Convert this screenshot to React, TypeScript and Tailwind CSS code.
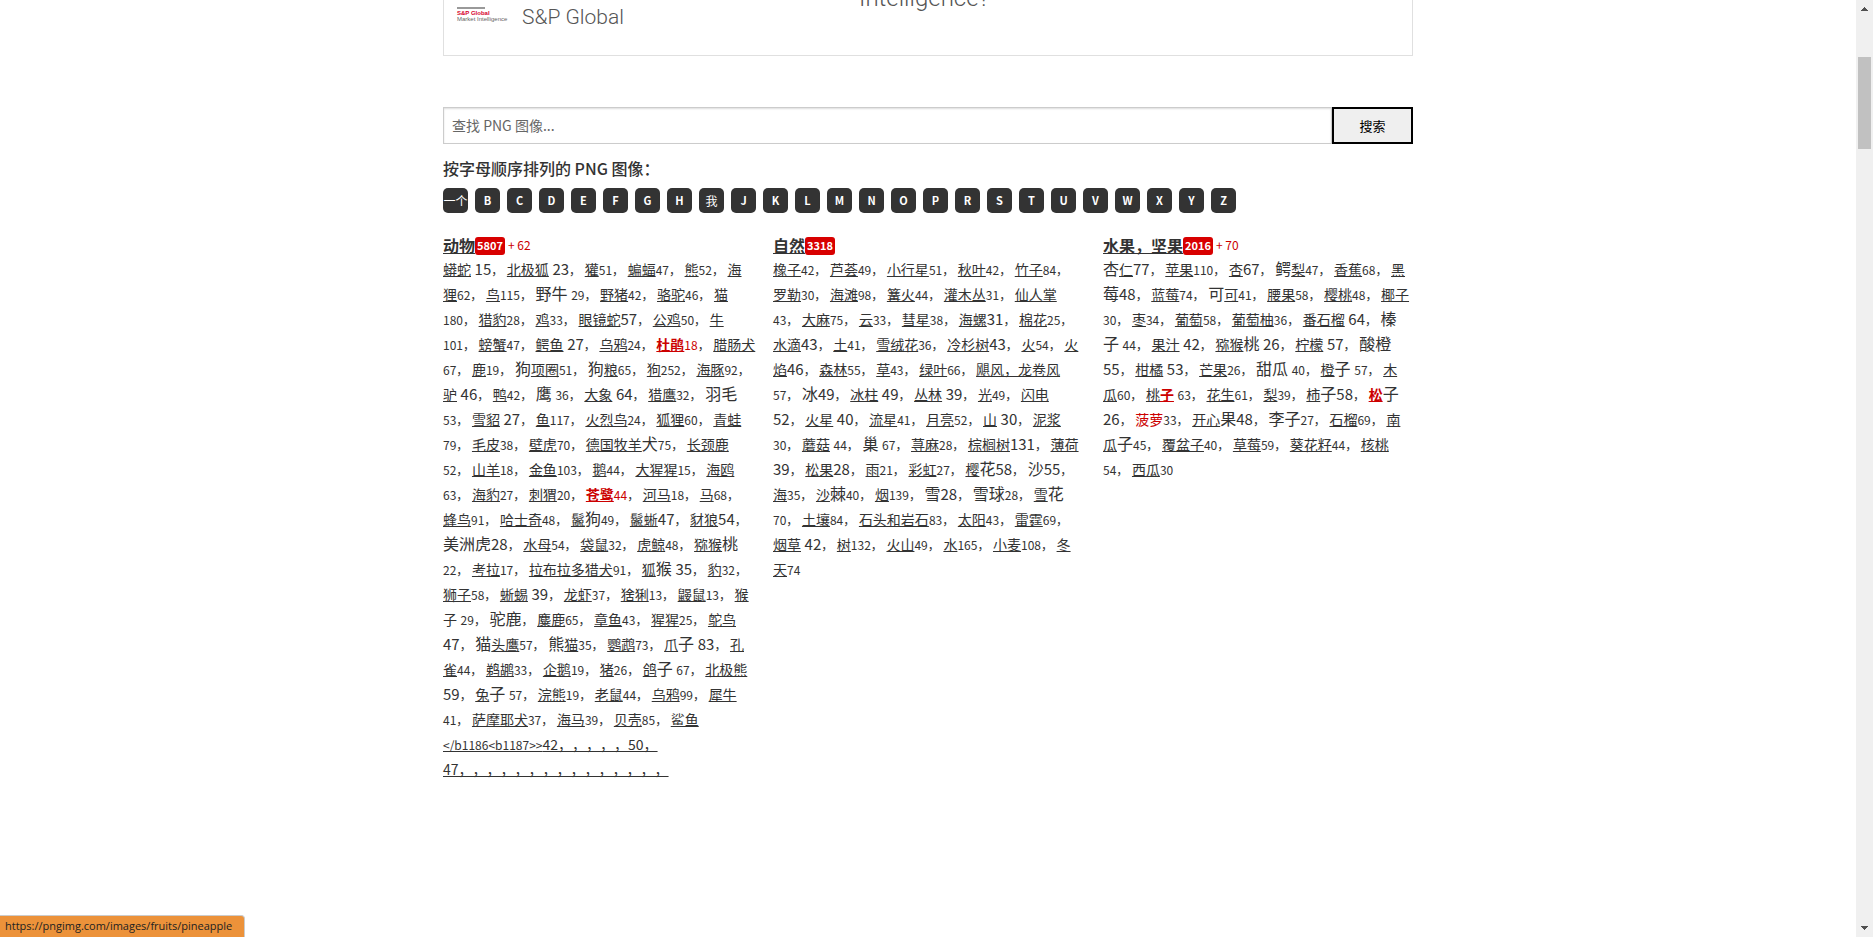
import React from "react";

/*
 * Row notation used by the category lists:
 *   [text]  link            *text*  highlighted link      %text%  hovered link
 *   ~text~  large plain     _text_  small plain
 *   #12     large count     12      small count           @12     highlighted count
 */
type Category = {
  title: string;
  total: string;
  added?: string;
  href: string;
  rows: string[];
  tail?: { tag?: string; text: string }[];
};

const categories: Category[] = [
  {
    title: "动物",
    total: "5807",
    added: "+ 62",
    href: "#animals",
    rows: [
      "[蟒蛇] #15，[北极狐] #23，[獾]51，[蝙蝠]47，[熊]52，[海]",
      "[狸]62，[鸟]115，~野牛~ 29，[野猪]42，[骆驼]46，[猫]",
      "180，[猎豹]28，[鸡]33，[眼镜蛇]#57，[公鸡]50，[牛]",
      "101，[螃蟹]47，[鳄鱼] #27，[乌鸦]24，*杜鹃*@18，[腊肠犬]",
      "67，[鹿]19，~狗~[项圈]51，~狗~[粮]65，[狗]252，[海豚]92，",
      "[驴] #46，[鸭]42，~鹰~ 36，[大象] #64，[猎鹰]32，~羽毛~",
      "53，[雪貂] #27，[鱼]117，[火烈鸟]24，[狐狸]60，[青蛙]",
      "79，[毛皮]38，[壁虎]70，[德国牧羊]~犬~75，[长颈鹿]",
      "52，[山羊]18，[金鱼]103，[鹅]44，[大猩猩]15，[海鸥]",
      "63，[海豹]27，[刺猬]20，*苍鹭*@44，[河马]18，[马]68，",
      "[蜂鸟]91，[哈士奇]48，[鬣]~狗~49，[鬣蜥]#47，[豺狼]#54，",
      "~美洲虎~#28，[水母]54，[袋鼠]32，[虎鲸]48，[猕猴]~桃~",
      "22，[考拉]17，[拉布拉多猎犬]91，[狐]~猴~ #35，[豹]32，",
      "[狮子]58，[蜥蜴] #39，[龙虾]37，[猞猁]13，[鼹鼠]13，[猴]",
      "_子_ 29，~驼鹿~，[麋鹿]65，[章鱼]43，[猩猩]25，[鸵鸟]",
      "#47，~猫~[头鹰]57，~熊~[猫]35，[鹦鹉]73，[爪]~子~ #83，[孔]",
      "[雀]44，[鹈鹕]33，[企鹅]19，[猪]26，[鸽]~子~ 67，[北极熊]",
      "#59，[兔]~子~ 57，[浣熊]19，[老鼠]44，[乌鸦]99，[犀牛]",
      "41，[萨摩耶犬]37，[海马]39，[贝壳]85，[鲨鱼]",
    ],
    tail: [
      { tag: "</b1186<b1187>>", text: "42，，，，，50，" },
      { text: "47，，，，，，，，，，，，，，，" },
    ],
  },
  {
    title: "自然",
    total: "3318",
    href: "#nature",
    rows: [
      "[橡子]42，[芦荟]49，[小行星]51，[秋叶]42，[竹子]84，",
      "[罗勒]30，[海滩]98，[篝火]44，[灌木丛]31，[仙人掌]",
      "43，[大麻]75，[云]33，[彗星]38，[海螺]#31，[棉花]25，",
      "[水滴]#43，[土]41，[雪绒花]36，[冷杉树]#43，[火]54，[火]",
      "[焰]#46，[森林]55，[草]43，[绿叶]66，[飓风，龙卷风]",
      "57，~冰~#49，[冰柱] #49，[丛林] #39，[光]49，[闪电]",
      "#52，[火星] #40，[流星]41，[月亮]52，[山] #30，[泥浆]",
      "30，[蘑菇] 44，~巢~ 67，[荨麻]28，[棕榈树]#131，[薄荷]",
      "#39，[松果]#28，[雨]21，[彩虹]27，[樱]~花~#58，~沙~#55，",
      "[海]35，[沙]~棘~40，[烟]139，~雪~#28，~雪球~28，[雪]~花~",
      "70，[土壤]84，[石头和岩石]83，[太阳]43，[雷霆]69，",
      "[烟草] #42，[树]132，[火山]49，[水]165，[小麦]108，[冬]",
      "[天]74",
    ],
  },
  {
    title: "水果，坚果",
    total: "2016",
    added: "+ 70",
    href: "#fruits",
    rows: [
      "~杏~[仁]#77，[苹果]110，[杏]#67，~鳄~[梨]47，[香蕉]68，[黑]",
      "~莓~#48，[蓝莓]74，~可~[可]41，[腰果]58，[樱桃]48，[椰子]",
      "30，[枣]34，[葡萄]58，[葡萄柚]36，[番石榴] #64，~榛~",
      "~子~ 44，[果汁] #42，[猕猴]~桃~ #26，[柠檬] #57，~酸橙~",
      "#55，[柑橘] #53，[芒果]26，~甜瓜~ 40，[橙]~子~ 57，[木]",
      "[瓜]60，[桃]*子* 63，[花生]61，[梨]39，[柿]~子~#58，*松*~子~",
      "#26，%菠萝%33，[开心]~果~#48，~李子~27，[石榴]69，[南]",
      "[瓜]~子~45，[覆盆子]40，[草莓]59，[葵花籽]44，[核桃]",
      "54，[西瓜]30",
    ],
  },
];

const letters = [
  "一个", "B", "C", "D", "E", "F", "G", "H", "我", "J", "K", "L", "M",
  "N", "O", "P", "R", "S", "T", "U", "V", "W", "X", "Y", "Z",
];

const tokenPattern = /\[[^\]]+\]|\*[^*]+\*|%[^%]+%|~[^~]+~|_[^_]+_|#\d+|@\d+|\d+|，| /g;

function Token({ token, href }: { token: string; href: string }) {
  const inner = token.slice(1, -1);
  switch (token[0]) {
    case "[":
      return <a href={href} className="text-sm leading-none underline">{inner}</a>;
    case "*":
      return <a href={href} className="text-sm leading-none font-bold text-[#c00] underline">{inner}</a>;
    case "%":
      return <a href={href} className="text-sm leading-none text-[#c00]">{inner}</a>;
    case "~":
      return <span className="leading-none">{inner}</span>;
    case "_":
      return <span className="text-sm leading-none">{inner}</span>;
    case "#":
      return <span className="text-[15px] leading-none">{token.slice(1)}</span>;
    case "@":
      return <span className="text-xs leading-none text-[#c00]">{token.slice(1)}</span>;
    case "，":
      return <><span className="text-xs leading-none">，</span> </>;
    case " ":
      return <> </>;
    default:
      return <span className="text-xs leading-none">{token}</span>;
  }
}

function CategoryColumn({ category }: { category: Category }) {
  return (
    <section className="min-w-0 flex-1">
      <h2 className="flex h-6 items-center">
        <a href={category.href} className="text-base leading-6 font-bold underline">{category.title}</a>
        <span className="mt-px flex h-[18px] items-center rounded-[3px] bg-[#d80000] px-[2px] text-[11px] font-bold text-white">
          {category.total}
        </span>
        {category.added && <span className="ml-[3px] text-xs text-[#c00]">{category.added}</span>}
      </h2>
      <div className="text-base leading-[23px] whitespace-nowrap">
        {category.rows.map((row, i) => (
          <div key={i} className="h-[25px]">
            {(row.match(tokenPattern) ?? []).map((token, j) => (
              <Token key={j} token={token} href={category.href} />
            ))}
          </div>
        ))}
        {category.tail?.map(({ tag, text }) => (
          <div key={text} className="h-[25px] [text-spacing-trim:space-all]">
            <a href={category.href} className="text-sm leading-none underline">
              {tag && <span className="text-xs leading-none">{tag}</span>}
              {text}
            </a>
          </div>
        ))}
      </div>
    </section>
  );
}

function SponsorBanner() {
  return (
    <div className="flex h-14 overflow-hidden border border-t-0 border-[#e0e0e0]">
      <div className="ml-[13px] flex w-[402px] shrink-0 items-start">
        <div className="mt-[7px] w-[52px] font-['Liberation_Sans'] text-[6px] leading-[6px] whitespace-nowrap text-[#666]">
          <div className="w-7 border-t-2 border-[#999] pt-px font-bold text-[#d6002a]">S&amp;P Global</div>
          <div>Market Intelligence</div>
        </div>
        <span className="mt-px ml-[13px] font-[Roboto] text-[21px] leading-8 font-light text-[#555]">S&amp;P Global</span>
      </div>
      <p className="-mt-[18px] font-[Roboto] text-2xl leading-8 font-light text-[#555]">Intelligence?</p>
    </div>
  );
}

function Scrollbar() {
  return (
    <aside aria-hidden="true" className="flex w-[17px] shrink-0 flex-col items-center justify-between bg-[#f0f0f0]">
      <div className="flex flex-col items-center">
        <svg className="mt-[7px]" width="7" height="4" viewBox="0 0 7 4" fill="#505050">
          <path d="M3 0h1v1h1v1h1v1h1v1H0V3h1V2h1V1h1z" />
        </svg>
        <div className="mt-[46px] h-[92px] w-[13px] bg-[#c1c1c1]" />
      </div>
      <svg className="mb-[7px]" width="7" height="4" viewBox="0 0 7 4" fill="#505050">
        <path d="M0 0h7v1H6v1H5v1H4v1H3V3H2V2H1V1H0z" />
      </svg>
    </aside>
  );
}

export default function App() {
  return (
    <div className="relative flex h-screen overflow-hidden bg-white font-['Noto_Sans_CJK_SC',sans-serif] text-[#333]">
      <div className="min-w-0 flex-1">
        <main className="mx-auto max-w-[970px]">
          <SponsorBanner />
          <form className="mt-[51px] flex h-[37px]" onSubmit={(e) => e.preventDefault()}>
            <input
              type="text"
              aria-label="查找 PNG 图像"
              placeholder="查找 PNG 图像..."
              className="min-w-0 flex-1 border border-[#ccc] px-2 pb-[2px] text-sm shadow-[inset_0_1px_2px_#ddd] outline-none placeholder:text-[#666]"
            />
            <button type="submit" className="w-[81px] border-2 border-black bg-[#efefef] text-[13px] text-black">
              搜索
            </button>
          </form>
          <h1 className="mt-[10px] text-base leading-7 font-medium">按字母顺序排列的 PNG 图像：</h1>
          <nav className="mt-[6px] flex gap-[7px]">
            {letters.map((letter) => (
              <a
                key={letter}
                href={`#${letter}`}
                className="flex h-[25px] w-[25px] items-center justify-center rounded-[5px] bg-[#333] text-[11px] font-bold whitespace-nowrap text-white"
              >
                {letter.length > 1 || letter === "我" ? <span className="text-xs font-normal">{letter}</span> : letter}
              </a>
            ))}
          </nav>
          <div className="mt-5 flex gap-5">
            {categories.map((category) => (
              <CategoryColumn key={category.title} category={category} />
            ))}
          </div>
        </main>
      </div>
      <Scrollbar />
      <div className="absolute bottom-0 left-0 flex h-[22px] items-center rounded-tr border-t border-r border-[#ccc] bg-[#ec923a] pr-3 pl-[5px] font-['Open_Sans'] text-[11px] text-[#222]">
        https://pngimg.com/images/fruits/pineapple
      </div>
    </div>
  );
}
